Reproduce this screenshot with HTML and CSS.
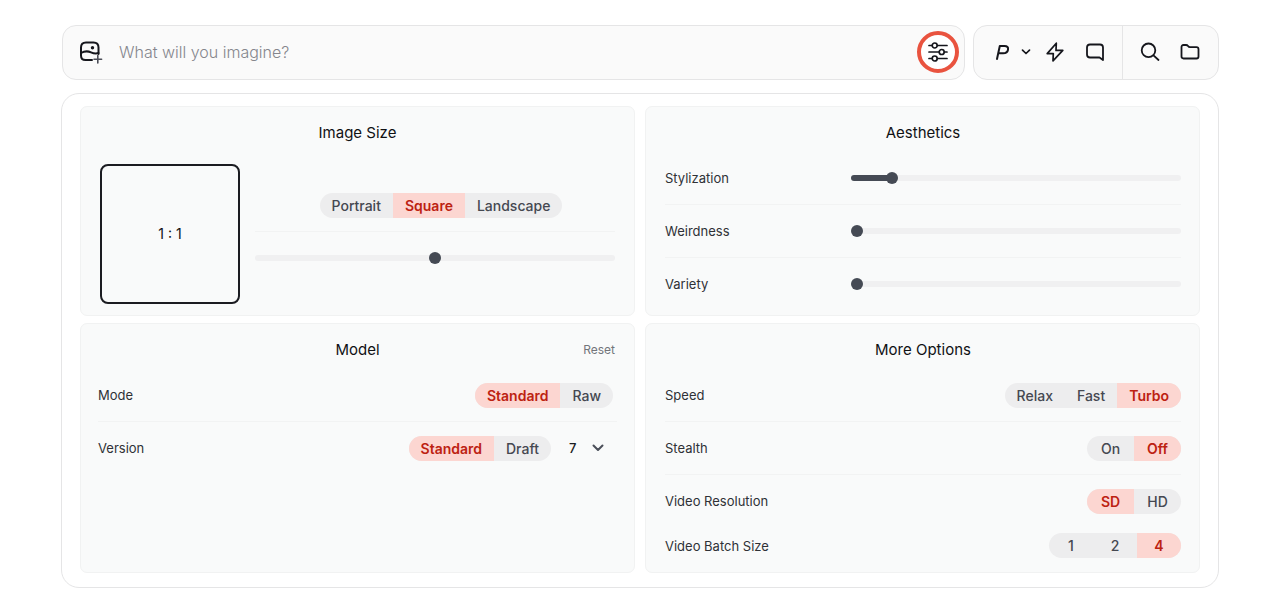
FILE: index.html
```html
<!DOCTYPE html>
<html lang="en">
<head>
<meta charset="utf-8">
<meta name="viewport" content="width=device-width, initial-scale=1">
<title>Image settings</title>
<link rel="stylesheet" href="styles.css">
</head>
<body>
<div class="page">
  <header class="topbar">
    <form class="prompt">
      <button class="icon-btn" type="button" aria-label="Add image">
        <svg width="24" height="24" viewBox="0 0 24 24" fill="none" stroke="#15161c" stroke-width="2" stroke-linecap="round" stroke-linejoin="round">
          <path d="M13 20H6.500C3.500 20 2 18.500 2 15.500V7.500C2 4 3.500 2.500 7 2.500H14.500C18 2.500 19.500 4 19.500 7.500V14"/>
          <path d="M2 13C5.500 11 9 11 12 12.300C15 13.600 17 13.800 19.500 13"/>
          <circle cx="13.500" cy="7.700" r="1.700" fill="#15161c" stroke="none"/>
          <path d="M18.800 15.500V23M15 19.300H22.600" stroke="#4b4d57" stroke-width="1.600"/>
        </svg>
      </button>
      <input class="prompt-input" type="text" placeholder="What will you imagine?" aria-label="Prompt">
      <button class="settings-btn" type="button" aria-label="Settings">
        <svg width="20" height="20" viewBox="0 0 20 20" fill="none" stroke="#15161c" stroke-width="1.700" stroke-linecap="round">
          <path d="M1 3.500H4M9.500 3.500H19M1 10H11M16.500 10H19M1 16.500H4M9.500 16.500H19"/>
          <circle cx="6.700" cy="3.500" r="2.500"/><circle cx="13.700" cy="10" r="2.500"/><circle cx="6.700" cy="16.500" r="2.500"/>
        </svg>
      </button>
    </form>
    <nav class="tools" aria-label="Tools">
      <div class="tool-group tool-group-main">
        <button class="icon-btn profile-btn" type="button" aria-label="Personalize">
          <svg width="16" height="18" viewBox="0 0 16 18" fill="none" stroke="#15161c" stroke-width="2" stroke-linecap="round" stroke-linejoin="round">
            <path d="M2 16L4.800 3H9.500C12.300 3 13.500 4.400 13 6.700C12.500 9.200 10.700 10.300 8.200 10.300H3.300"/>
          </svg>
          <svg width="10" height="8" viewBox="0 0 10 8" fill="none" stroke="#15161c" stroke-width="1.700" stroke-linecap="round" stroke-linejoin="round"><path d="M1.500 2.200L5 5.500L8.500 2.200"/></svg>
        </button>
        <button class="icon-btn" type="button" aria-label="Speed mode">
          <svg width="20" height="20" viewBox="0 0 20 20" fill="none" stroke="#15161c" stroke-width="1.700" stroke-linejoin="round"><path d="M11.300 1.200L2.200 11.600H8.300L8 18.800L17.800 8.400H11Z"/></svg>
        </button>
        <button class="icon-btn" type="button" aria-label="Chat">
          <svg width="20" height="20" viewBox="0 0 20 20" fill="none" stroke="#15161c" stroke-width="1.800" stroke-linejoin="round"><path d="M5 2.500H15C17 2.500 18 3.500 18 5.500V18L14.500 15.500H5C3 15.500 2 14.500 2 12.500V5.500C2 3.500 3 2.500 5 2.500Z"/></svg>
        </button>
      </div>
      <div class="tool-group tool-group-side">
        <button class="icon-btn" type="button" aria-label="Search">
          <svg width="20" height="20" viewBox="0 0 20 20" fill="none" stroke="#15161c" stroke-width="1.800" stroke-linecap="round"><circle cx="8.500" cy="8.300" r="6.800"/><path d="M13.500 13.300L18.500 18"/></svg>
        </button>
        <button class="icon-btn" type="button" aria-label="Folders">
          <svg width="20" height="20" viewBox="0 0 20 20" fill="none" stroke="#15161c" stroke-width="1.800" stroke-linejoin="round"><path d="M1.500 5C1.500 3.700 2.200 3 3.500 3H6C7 3 7.500 3.300 8 4C8.600 4.900 9 5.200 10 5.200H16.500C17.800 5.200 18.500 5.900 18.500 7.200V14.500C18.500 15.800 17.800 16.500 16.500 16.500H3.500C2.200 16.500 1.500 15.800 1.500 14.500Z"/></svg>
        </button>
      </div>
    </nav>
  </header>

  <main class="panel">
    <section class="card">
      <div class="card-head"><h2 class="card-title">Image Size</h2></div>
      <div class="size-body">
        <div class="ratio-box">1 : 1</div>
        <div class="size-controls">
          <fieldset class="seg size-seg" aria-label="Orientation">
            <label class="seg-item"><input type="radio" name="orient">Portrait</label>
            <label class="seg-item"><input type="radio" name="orient" checked>Square</label>
            <label class="seg-item"><input type="radio" name="orient">Landscape</label>
          </fieldset>
          <div class="size-slider"><input class="slider" type="range" value="50" aria-label="Aspect ratio"></div>
        </div>
      </div>
    </section>

    <section class="card card-right">
      <div class="card-head"><h2 class="card-title">Aesthetics</h2></div>
      <div class="row"><label class="slider-label" for="stylization">Stylization</label><input class="slider slider-filled" id="stylization" type="range" value="11" style="--value: 11%"></div>
      <div class="row"><label class="slider-label" for="weirdness">Weirdness</label><input class="slider" id="weirdness" type="range" value="0"></div>
      <div class="row"><label class="slider-label" for="variety">Variety</label><input class="slider" id="variety" type="range" value="0"></div>
    </section>

    <section class="card card-model">
      <div class="card-head"><h2 class="card-title">Model</h2><button class="reset" type="button">Reset</button></div>
      <div class="row">
        <span>Mode</span>
        <fieldset class="seg" aria-label="Mode">
          <label class="seg-item"><input type="radio" name="mode" checked>Standard</label>
          <label class="seg-item"><input type="radio" name="mode">Raw</label>
        </fieldset>
      </div>
      <div class="row">
        <label for="version">Version</label>
        <div class="version-controls">
          <fieldset class="seg" aria-label="Version quality">
            <label class="seg-item"><input type="radio" name="quality" checked>Standard</label>
            <label class="seg-item"><input type="radio" name="quality">Draft</label>
          </fieldset>
          <div class="version-picker">
            <select class="version-select" id="version"><option>7</option></select>
            <svg class="version-arrow" width="12" height="8" viewBox="0 0 12 8" fill="none" stroke="#4b4f59" stroke-width="2" stroke-linecap="round" stroke-linejoin="round"><path d="M1.500 1.500L6 6L10.500 1.500"/></svg>
          </div>
        </div>
      </div>
    </section>

    <section class="card card-right">
      <div class="card-head"><h2 class="card-title">More Options</h2></div>
      <div class="row">
        <span>Speed</span>
        <fieldset class="seg" aria-label="Speed">
          <label class="seg-item"><input type="radio" name="speed">Relax</label>
          <label class="seg-item"><input type="radio" name="speed">Fast</label>
          <label class="seg-item"><input type="radio" name="speed" checked>Turbo</label>
        </fieldset>
      </div>
      <div class="row">
        <span>Stealth</span>
        <fieldset class="seg seg-pair" aria-label="Stealth">
          <label class="seg-item"><input type="radio" name="stealth">On</label>
          <label class="seg-item"><input type="radio" name="stealth" checked>Off</label>
        </fieldset>
      </div>
      <div class="row row-plain">
        <span>Video Resolution</span>
        <fieldset class="seg seg-pair" aria-label="Video Resolution">
          <label class="seg-item"><input type="radio" name="resolution" checked>SD</label>
          <label class="seg-item"><input type="radio" name="resolution">HD</label>
        </fieldset>
      </div>
      <div class="row row-compact">
        <span>Video Batch Size</span>
        <fieldset class="seg seg-count" aria-label="Video Batch Size">
          <label class="seg-item"><input type="radio" name="batch">1</label>
          <label class="seg-item"><input type="radio" name="batch">2</label>
          <label class="seg-item"><input type="radio" name="batch" checked>4</label>
        </fieldset>
      </div>
    </section>
  </main>
</div>
</body>
</html>
```

FILE: styles.css
```css
* { box-sizing: border-box; }

body {
  margin: 0;
  background: #fff;
  color: #2f3136;
  font: 400 13px/20px Inter, "Liberation Sans", sans-serif;
}

button, input, select { font: inherit; color: inherit; }
button { padding: 0; border: 0; background: none; cursor: pointer; }
svg { display: block; flex: none; }

.page { padding: 25px 61px 22px; }

/* Top bar */
.topbar { display: flex; gap: 8px; padding-left: 1px; }

.prompt, .tools {
  display: flex;
  height: 55px;
  border: 1px solid #e5e5e6;
  border-radius: 14px;
  background: #fafafa;
}

.prompt { flex: 1; align-items: center; gap: 16px; padding: 0 5px 1px 16px; }

.prompt-input {
  flex: 1;
  min-width: 0;
  padding: 0;
  border: 0;
  outline: 0;
  background: none;
  font-size: 16px;
  font-weight: 300;
}
.prompt-input::placeholder { color: #85868d; opacity: 1; }

.settings-btn {
  display: grid;
  place-items: center;
  width: 42px;
  height: 42px;
  border: 4px solid #e9533f;
  border-radius: 50%;
  background: #fff;
}

.tools { flex: none; }
.tool-group { display: flex; align-items: center; gap: 20px; padding-bottom: 2px; }
.tool-group-main { padding-left: 21px; padding-right: 17px; }
.tool-group-side { border-left: 1px solid #e5e5e6; padding-left: 17px; padding-right: 18px; }
.profile-btn { display: flex; align-items: center; gap: 10px; margin-right: -6px; }

/* Settings panel */
.panel {
  display: grid;
  grid-template-columns: 1fr 1fr;
  gap: 7px 10px;
  margin-top: 13px;
  padding: 12px 18px 14px;
  border: 1px solid #e5e5e6;
  border-radius: 18px;
}

.card {
  min-width: 0;
  padding: 0 17px 4px;
  border: 1px solid #f1f2f2;
  border-radius: 7px;
  background: #f9fafa;
}
.card-right { padding-left: 19px; padding-right: 18px; }

.card-head {
  display: grid;
  grid-template-columns: 1fr auto 1fr;
  padding: 16px 0 9px;
}
.card-title {
  grid-column: 2;
  margin: 0;
  color: #101114;
  font-size: 15px;
  font-weight: 400;
}
.reset { justify-self: end; padding-right: 2px; color: #73757a; font-size: 12px; }

.row {
  display: flex;
  align-items: center;
  justify-content: space-between;
  height: 53px;
  border-bottom: 1px solid #f2f3f3;
}
.row:last-child, .row-plain { border-bottom-color: transparent; }
.row-compact { height: 36px; margin-bottom: 4px; }
.card-model .row { padding-right: 4px; }

/* Segmented controls */
.seg {
  display: flex;
  margin: 0;
  padding: 0;
  border: 0;
  border-radius: 13px;
  overflow: hidden;
  background: #ededee;
}
.seg-item {
  position: relative;
  padding: 0 12px;
  color: #454851;
  font-size: 14px;
  font-weight: 500;
  line-height: 25px;
  text-align: center;
  cursor: pointer;
}
.seg-item input {
  position: absolute;
  inset: 0;
  margin: 0;
  opacity: 0;
  cursor: pointer;
}
.seg-item:has(:checked) { background: #fcd6d1; color: #bd2211; font-weight: 600; }
.seg-pair .seg-item { width: 47px; }
.seg-count .seg-item { width: 44px; }
.seg-pair .seg-item, .seg-count .seg-item { padding: 0; }

/* Sliders */
.slider-label { flex: 1; }
.slider {
  --track: #f0f0f1;
  appearance: none;
  width: 64%;
  height: 12px;
  margin: 0;
  background: none;
}
.slider::-webkit-slider-runnable-track {
  height: 6px;
  border-radius: 3px;
  background: var(--track);
}
.slider-filled::-webkit-slider-runnable-track {
  background: linear-gradient(to right, #454a54 var(--value), var(--track) var(--value));
}
.slider::-webkit-slider-thumb {
  appearance: none;
  width: 12px;
  height: 12px;
  margin-top: -3px;
  border-radius: 50%;
  background: #454a54;
}

/* Image size */
.size-body { display: flex; gap: 15px; padding: 12px 2px 7px; }
.ratio-box {
  display: grid;
  place-items: center;
  width: 140px;
  height: 140px;
  border: 2px solid #1b1c21;
  border-radius: 8px;
  color: #101114;
  font-size: 14px;
}
.size-controls {
  flex: 1;
  display: flex;
  flex-direction: column;
  align-items: center;
  padding-top: 29px;
}
.size-seg { margin-left: 12px; }
.size-slider {
  display: flex;
  align-items: center;
  width: 100%;
  height: 53px;
  margin-top: 13px;
  border-top: 1px solid #f2f3f3;
}
.size-slider .slider { width: 100%; }

/* Version */
.version-controls { display: flex; align-items: center; gap: 18px; }
.version-picker { display: grid; align-items: center; width: 44px; padding-right: 9px; }
.version-select {
  grid-area: 1 / 1;
  appearance: none;
  width: 100%;
  padding: 0;
  border: 0;
  background: none;
  color: #1b1c21;
  font-size: 13px;
  font-weight: 500;
}
.version-arrow { grid-area: 1 / 1; justify-self: end; pointer-events: none; }
```
